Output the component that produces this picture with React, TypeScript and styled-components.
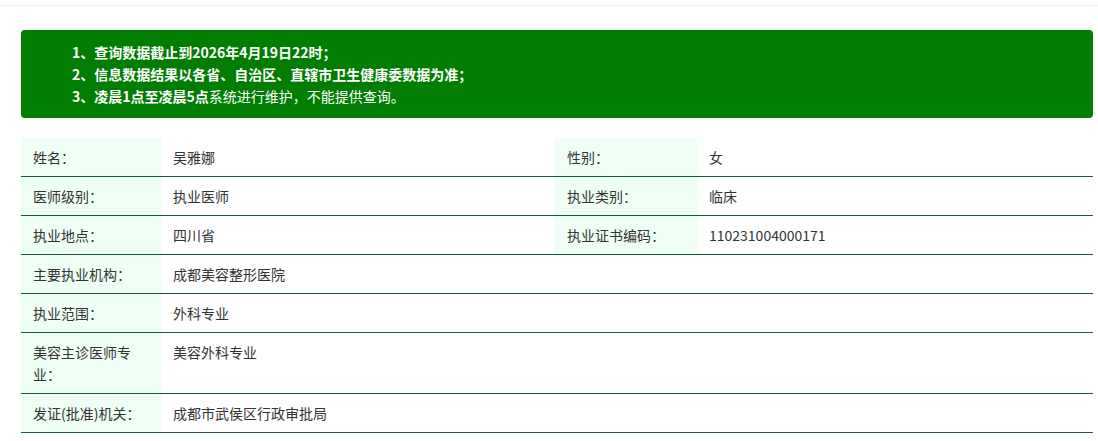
import React from "react";
import styled, { createGlobalStyle } from "styled-components";

const GlobalStyle = createGlobalStyle`
  html, body {
    margin: 0;
    padding: 0;
    background: #ffffff;
  }
  body {
    font-family: "Noto Sans CJK SC", "Noto Sans", sans-serif;
    color: #333333;
  }
`;

const TopBar = styled.div`
  height: 5px;
  border-bottom: 1px solid #ececec;
`;

const Content = styled.main`
  padding: 24px 5px 0 21px;
  display: flex;
  flex-direction: column;
  gap: 20px;
`;

const Notice = styled.ol`
  margin: 0;
  list-style: none;
  background: #017d01;
  border-radius: 4px;
  padding: 11px 20px 11px 51px;
  color: #ffffff;
  font-size: 14px;
  line-height: 22px;
`;

const NoticeItem = styled.li<{ $weight?: number }>`
  font-weight: ${(p) => p.$weight ?? 600};
`;

const Strong = styled.b`
  font-weight: 700;
`;

const Table = styled.section`
  display: flex;
  flex-direction: column;
`;

const Row = styled.div`
  display: grid;
  grid-template-columns: 140px 394px 142px 1fr;
  border-bottom: 1px solid #1b5b3d;
  font-size: 14px;
  line-height: 22px;
`;

const Label = styled.div`
  background: #f0fff6;
  padding: 8px 12px;
  color: #333333;
`;

const Value = styled.div<{ $span?: number }>`
  padding: 8px 12px;
  color: #333333;
  grid-column: span ${(p) => p.$span ?? 1};
`;

type Pair = [string, string];

const rows: Array<Pair[]> = [
  [["姓名：", "吴雅娜"], ["性别：", "女"]],
  [["医师级别：", "执业医师"], ["执业类别：", "临床"]],
  [["执业地点：", "四川省"], ["执业证书编码：", "110231004000171"]],
  [["主要执业机构：", "成都美容整形医院"]],
  [["执业范围：", "外科专业"]],
  [["美容主诊医师专业：", "美容外科专业"]],
  [["发证(批准)机关：", "成都市武侯区行政审批局"]],
];

export default function App() {
  return (
    <>
      <GlobalStyle />
      <TopBar />
      <Content>
        <Notice>
          <NoticeItem>
            1、查询数据截止到<Strong>2026年4月19日22时</Strong>；
          </NoticeItem>
          <NoticeItem>2、信息数据结果以各省、自治区、直辖市卫生健康委数据为准；</NoticeItem>
          <NoticeItem $weight={400}>
            <Strong>3、凌晨1点至凌晨5点</Strong>系统进行维护，不能提供查询。
          </NoticeItem>
        </Notice>
        <Table>
          {rows.map((row, i) => (
            <Row key={i}>
              {row.map(([label, value], j) => (
                <React.Fragment key={j}>
                  <Label>{label}</Label>
                  <Value $span={row.length === 1 ? 3 : 1}>{value}</Value>
                </React.Fragment>
              ))}
            </Row>
          ))}
        </Table>
      </Content>
    </>
  );
}
